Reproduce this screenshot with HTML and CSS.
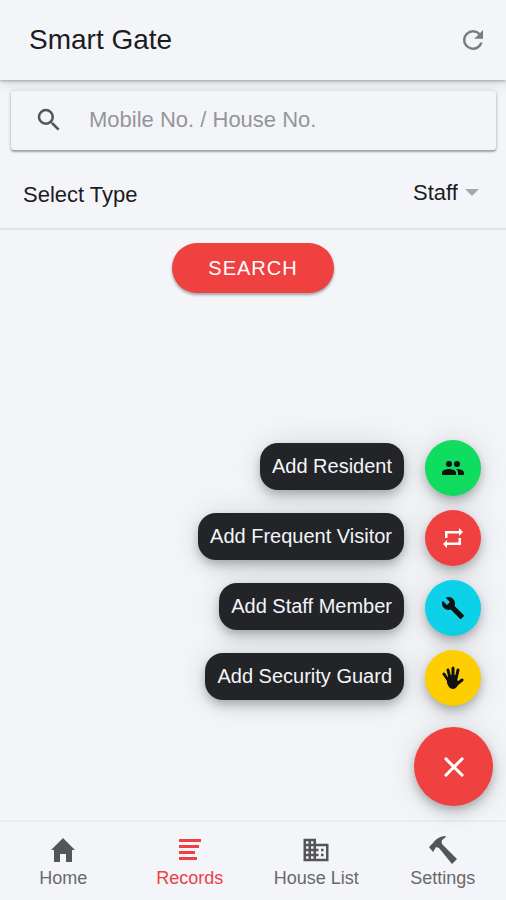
FILE: index.html
```html
<!DOCTYPE html>
<html lang="en">
<head>
<meta charset="utf-8">
<meta name="viewport" content="width=device-width, initial-scale=1">
<title>Smart Gate</title>
<link rel="stylesheet" href="styles.css">
</head>
<body>
<header class="toolbar">
  <h1 class="toolbar-title">Smart Gate</h1>
  <button class="icon-button" type="button" aria-label="Refresh">
    <svg viewBox="0 0 24 24" width="30" height="30"><path d="M17.65 6.35A7.95 7.95 0 0 0 12 4a8 8 0 1 0 7.73 10h-2.08A6 6 0 1 1 12 6c1.66 0 3.14.69 4.22 1.78L13 11h7V4z"/></svg>
  </button>
</header>

<main class="content">
  <form class="filters">
    <div class="searchbar">
      <svg class="search-icon" viewBox="0 0 24 24" width="30" height="30"><path d="M15.5 14h-.79l-.28-.27A6.47 6.47 0 0 0 16 9.500 6.500 6.500 0 1 0 9.500 16c1.610 0 3.090-.59 4.230-1.570l.27.28v.79l5 4.990L20.490 19zm-6 0a4.500 4.500 0 1 1 0-9 4.500 4.500 0 0 1 0 9z"/></svg>
      <input class="search-input" type="text" placeholder="Mobile No. / House No." aria-label="Mobile No. / House No.">
    </div>
    <div class="select-row">
      <label class="select-label" for="type">Select Type</label>
      <div class="select-wrap">
        <select class="select" id="type"><option>Staff</option></select>
        <svg class="caret" viewBox="0 0 14 7" width="14" height="7"><path d="M0 0h14L7 7z"/></svg>
      </div>
    </div>
    <button class="search-button" type="submit">SEARCH</button>
  </form>

  <div class="fab-menu">
    <div class="fab-item">
      <label class="fab-label" for="add-resident">Add Resident</label>
      <button class="fab fab-green" id="add-resident" type="button">
        <svg viewBox="0 0 24 24" width="24" height="24"><path d="M16 11a3 3 0 1 0 0-6 3 3 0 0 0 0 6zm-8 0a3 3 0 1 0 0-6 3 3 0 0 0 0 6zm0 2c-2.330 0-7 1.170-7 3.500V19h14v-2.500c0-2.330-4.670-3.500-7-3.500zm8 0c-.29 0-.62.02-.97.05 1.160.84 1.970 1.970 1.970 3.450V19h6v-2.500c0-2.330-4.670-3.500-7-3.500z"/></svg>
      </button>
    </div>
    <div class="fab-item">
      <label class="fab-label" for="add-visitor">Add Frequent Visitor</label>
      <button class="fab fab-red" id="add-visitor" type="button">
        <svg viewBox="0 0 20 20" width="20" height="20"><path d="M2 10V3h14V0l4 4-4 4V5.500H4.500V10zM18 10v7H4v3l-4-4 4-4v2.500h11.500V10z"/></svg>
      </button>
    </div>
    <div class="fab-item">
      <label class="fab-label" for="add-staff">Add Staff Member</label>
      <button class="fab fab-cyan" id="add-staff" type="button">
        <svg viewBox="0 0 24 24" width="24" height="24"><path d="M22.700 19l-9.100-9.100c.9-2.300.4-5-1.500-6.900-2-2-5-2.400-7.400-1.300L9 6 6 9 1.600 4.700C.4 7.100.9 10.100 2.900 12.100c1.900 1.900 4.600 2.400 6.900 1.500l9.100 9.100c.4.4 1 .4 1.400 0l2.300-2.300c.5-.4.5-1.100.1-1.400z"/></svg>
      </button>
    </div>
    <div class="fab-item">
      <label class="fab-label" for="add-guard">Add Security Guard</label>
      <button class="fab fab-yellow" id="add-guard" type="button">
        <svg viewBox="0 0 22 24" width="22" height="24"><path class="finger" d="M6 14L2 8M8 12L6 4M11 12V2M14 13l2-9M15 18l5-4"/><path d="M5 11l4-2h5l1 5 2 2c-1 4-3 7-6 7s-5-3-6-6z"/></svg>
      </button>
    </div>
    <button class="fab fab-main fab-red" type="button" aria-label="Close menu">
      <svg viewBox="0 0 20 20" width="20" height="20"><path class="cross" d="M1 1l18 18M19 1L1 19"/></svg>
    </button>
  </div>
</main>

<nav class="tabs">
  <a class="tab" href="#home">
    <svg viewBox="0 0 30 30" width="30" height="30"><path d="M15 3L3 15h3v12h6v-8h6v8h6V15h3z"/></svg>
    <span>Home</span>
  </a>
  <a class="tab tab-active" href="#records" aria-current="page">
    <svg viewBox="0 0 30 30" width="30" height="30"><path d="M4 4h22v3H4zM4 10h20v3H4zM4 16h16v3H4zM4 22h18v3H4z"/></svg>
    <span>Records</span>
  </a>
  <a class="tab" href="#houses">
    <svg viewBox="0 0 24 24" width="30" height="30"><path d="M12 7V3H2v18h20V7zM6 19H4v-2h2zm0-4H4v-2h2zm0-4H4V9h2zm0-4H4V5h2zm4 12H8v-2h2zm0-4H8v-2h2zm0-4H8V9h2zm0-4H8V5h2zm10 12h-8v-2h2v-2h-2v-2h2v-2h-2V9h8zm-2-8h-2v2h2zm0 4h-2v2h2z"/></svg>
    <span>House List</span>
  </a>
  <a class="tab" href="#settings">
    <svg viewBox="0 0 30 30" width="30" height="30"><path d="M1 12l4-4c3-4 7-7 13-7l-1 2c-3 1-4 3-3 6l15 15-5 5-13-16-3-1-3 5z"/></svg>
    <span>Settings</span>
  </a>
</nav>
</body>
</html>
```

FILE: styles.css
```css
* {
  box-sizing: border-box;
}

body {
  margin: 0;
  min-height: 100vh;
  display: flex;
  flex-direction: column;
  background: #f4f5f9;
  color: #1c1c1e;
  font-family: "Liberation Sans", Arial, sans-serif;
  font-size: 22px;
}

button,
input,
select {
  margin: 0;
  padding: 0;
  border: 0;
  background: none;
  color: inherit;
  font: inherit;
}

svg {
  display: block;
  fill: currentColor;
}

.toolbar {
  display: flex;
  align-items: center;
  justify-content: space-between;
  height: 80px;
  padding: 0 18px 0 29px;
  box-shadow: 0 1px 3px rgba(0, 0, 0, 0.3), 0 3px 12px rgba(0, 0, 0, 0.12);
}

.toolbar-title {
  margin: 0;
  font-size: 28px;
  font-weight: 400;
}

.icon-button {
  color: #7b7c7f;
}

.content {
  position: relative;
  flex: 1;
}

.filters {
  display: flex;
  flex-direction: column;
}

.searchbar {
  display: flex;
  align-items: center;
  gap: 25px;
  height: 59px;
  margin: 11px 10px 0 11px;
  padding: 0 23px 2px;
  border-radius: 3px;
  background: #f4f5f9;
  box-shadow: 0 2px 2px rgba(0, 0, 0, 0.3), 0 0 4px rgba(0, 0, 0, 0.16);
}

.search-icon {
  flex: none;
  color: #555659;
}

.search-input {
  flex: 1;
  min-width: 0;
  outline: 0;
}

.search-input::placeholder {
  color: #949599;
  opacity: 1;
}

.select-row {
  display: flex;
  align-items: center;
  justify-content: space-between;
  height: 80px;
  padding: 12px 27px 0 23px;
  border-bottom: 2px solid #e2e3e6;
}

.select-wrap {
  display: flex;
  align-items: center;
  gap: 7px;
  padding-bottom: 5px;
}

.select {
  appearance: none;
}

.caret {
  color: #a6a7aa;
}

.search-button {
  align-self: center;
  height: 50px;
  margin-top: 13px;
  padding: 0 36px;
  border-radius: 25px;
  background: #f04141;
  color: #fff;
  font-size: 20px;
  letter-spacing: 1px;
  box-shadow: 0 2px 3px rgba(0, 0, 0, 0.35);
}

.fab-menu {
  position: absolute;
  right: 13px;
  bottom: 14px;
  display: flex;
  flex-direction: column;
  align-items: flex-end;
  gap: 14px;
}

.fab-item {
  display: flex;
  align-items: flex-start;
  gap: 21px;
  padding-right: 12px;
}

.fab-label {
  margin-top: 3px;
  padding: 12px;
  border-radius: 18px;
  background: #222428;
  color: #f4f5f8;
  font-size: 20px;
  line-height: 23px;
}

.fab,
.fab-label {
  box-shadow: 0 4px 8px -1px rgba(0, 0, 0, 0.2), 0 8px 14px rgba(0, 0, 0, 0.1), 0 1px 32px rgba(0, 0, 0, 0.12);
}

.fab {
  display: grid;
  place-items: center;
  width: 56px;
  height: 56px;
  border-radius: 50%;
  color: #111;
}

.fab-green {
  background: #10dc60;
}

.fab-red {
  background: #f04141;
  color: #fff;
}

.fab-cyan {
  background: #0cd1e8;
}

.fab-yellow {
  background: #ffce00;
}

.fab-main {
  width: 79px;
  height: 79px;
  margin-top: 7px;
}

.cross {
  fill: none;
  stroke: currentColor;
  stroke-width: 3;
}

.finger {
  fill: none;
  stroke: currentColor;
  stroke-width: 3;
  stroke-linecap: round;
}

.tabs {
  display: grid;
  grid-template-columns: repeat(4, 1fr);
  height: 80px;
  border-top: 2px solid #ebecef;
}

.tab {
  display: flex;
  flex-direction: column;
  align-items: center;
  gap: 2px;
  padding-top: 13px;
  color: #68696c;
  font-size: 18px;
  line-height: 22px;
  text-decoration: none;
}

.tab svg {
  color: #545558;
}

.tab-active,
.tab-active svg {
  color: #ee4044;
}
```
